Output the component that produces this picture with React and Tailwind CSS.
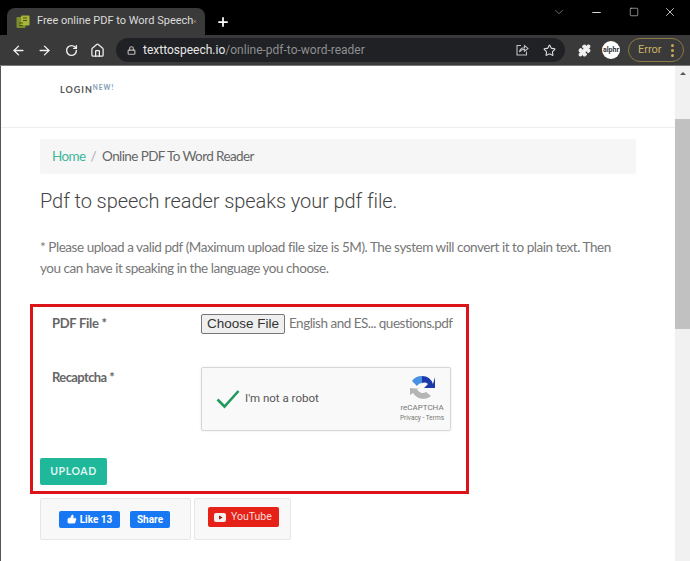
import { ArrowLeft, ArrowRight, RotateCw, Home, Lock, Star, Puzzle, X, Plus, ChevronDown, Minus, Square, ThumbsUp, Play } from 'lucide-react'

const TabBar = () => (
  <div className="h-[35px] bg-black flex items-end pl-[7px] text-white shrink-0">
    <div className="w-[198px] h-[27px] bg-[#3a3a3a] rounded-t-lg flex items-center pl-[9px] pr-[8px]">
      <svg width="14" height="14" viewBox="0 0 14 14" className="shrink-0">
        <rect x="0.5" y="2" width="9" height="11" rx="1" fill="#7d8c2c" />
        <rect x="5" y="0.5" width="8.5" height="10" rx="1" fill="#a8b536" />
        <path d="M7 3h4M7 5.5h4M3 8h4M3 10.5h4" stroke="#4c5618" strokeWidth="1" />
      </svg>
      <span className="ml-[7px] whitespace-nowrap text-[11px] text-[#dcdcdc] font-['Roboto',sans-serif]">Free online PDF to Word Speech</span>
      <X size={11} strokeWidth={3} className="ml-auto text-[#e8e8e8]" />
    </div>
    <Plus size={14} strokeWidth={3} className="ml-[11px] mb-[6px]" />
    <div className="ml-auto flex items-center pr-[13px] self-start pt-[5px] text-[#d8d8d8]">
      <ChevronDown size={14} strokeWidth={1.2} className="text-[#9a9a9a]" />
      <Minus size={13} strokeWidth={2} className="ml-[24px]" />
      <Square size={10} strokeWidth={1.5} className="ml-[26px]" />
      <X size={14} strokeWidth={1.5} className="ml-[24px]" />
    </div>
  </div>
)

const ToolBar = () => (
  <div className="h-[31px] bg-[#3a3a3a] border-b border-[#7b7b7b] flex items-center pl-[11px] text-[#f0f0f0] shrink-0">
    <ArrowLeft size={15} strokeWidth={2.2} />
    <ArrowRight size={15} strokeWidth={2.2} className="ml-[11px]" />
    <RotateCw size={13} strokeWidth={2.6} className="ml-[13px]" />
    <Home size={15} strokeWidth={2} className="ml-[12px]" />
    <div className="ml-[11px] w-[449px] h-[24px] bg-[#202124] rounded-full flex items-center pl-[11px] pr-[9px]">
      <Lock size={9} strokeWidth={3} className="text-[#b8b8b8]" />
      <span className="ml-[7px] text-[12px] font-['Roboto',sans-serif] text-[#e8e8e8] whitespace-nowrap">
        texttospeech.io<span className="text-[#8d8f92]">/online-pdf-to-word-reader</span>
      </span>
      <svg width="14" height="14" viewBox="0 0 14 14" fill="none" stroke="#c0c0c0" strokeWidth="1.1" className="ml-auto">
        <path d="M6 2.5H2v9.5h9.5V8.5" />
        <path d="M4.5 9c.4-2.6 2.2-4.2 5-4.2V2.6L13 5.4 9.5 8.2V6.2C7.5 6.2 5.7 7.2 4.5 9Z" />
      </svg>
      <Star size={13} strokeWidth={2} className="ml-[14px] text-[#e0e0e0]" />
    </div>
    <Puzzle size={13} strokeWidth={2} fill="currentColor" className="ml-[13px]" />
    <div className="ml-[11px] w-[18px] h-[18px] rounded-full bg-white text-[#333] text-[7px] font-bold flex items-center justify-center font-['Roboto',sans-serif]">alphr</div>
    <div className="ml-[8px] w-[56px] h-[24px] rounded-full border border-[#8a7a45] flex items-center pl-[9px] text-[11px] text-[#c9b067] font-['Roboto',sans-serif]">
      Error
      <div className="ml-auto mr-[9px] flex flex-col gap-[2px]">
        <span className="w-[3px] h-[3px] rounded-full bg-[#c9a94f]" />
        <span className="w-[3px] h-[3px] rounded-full bg-[#c9a94f]" />
        <span className="w-[3px] h-[3px] rounded-full bg-[#c9a94f]" />
      </div>
    </div>
  </div>
)

const Recaptcha = () => (
  <div className="w-[250px] h-[64px] shrink-0 bg-[#f9f9f9] border border-[#d6d6d6] rounded-[2px] shadow-[0_0_3px_rgba(0,0,0,0.08)] flex items-center font-['Roboto',sans-serif]">
    <svg width="24" height="20" viewBox="0 0 24 20" className="ml-[14px] shrink-0">
      <path d="M1.5 10.5 L8.5 17.5 L22.5 2" fill="none" stroke="#1f9a5c" strokeWidth="2.6" />
    </svg>
    <span className="ml-[5px] text-[11.5px] text-[#555]">I'm not a robot</span>
    <div className="ml-auto w-[56px] flex flex-col items-center text-[#777]">
      <svg width="26" height="27" viewBox="0 0 26 27">
        <path d="M13 1 A12 12 0 0 0 3 6 L8 11 A6 6 0 0 1 13 8 Z" fill="#4a90e2" />
        <path d="M13 1 A12 12 0 0 1 24 9 L26 2 L26 13 L15 13 L19 9 A6 6 0 0 0 13 8 Z" fill="#1c3aa9" />
        <path d="M1 13 L1 20 L4 18 A12 12 0 0 0 22 21 L17 17 A6 6 0 0 1 8 14 L12 14 L1 13 Z" fill="#b5b5b5" />
      </svg>
      <span className="text-[8px] leading-[10px] mt-[1px]">reCAPTCHA</span>
      <span className="text-[6.5px] leading-[10px] whitespace-nowrap">Privacy - Terms</span>
    </div>
  </div>
)

const App = () => {
  return (
    <div className="w-[690px] h-[561px] overflow-hidden flex flex-col bg-white font-['Lato',sans-serif]">
      <TabBar />
      <ToolBar />
      <div className="flex-1 flex min-h-0 border-l border-[#555]">
        <div className="flex-1 min-w-0">
          {/* Site header */}
          <div className="h-[62px] border-b border-[#eeeeee] pl-[59px] pt-[9px]">
            <span className="text-[9px] font-bold tracking-[1px] text-[#555]">LOGIN</span>
            <sup className="text-[6.5px] tracking-[1px] text-[#7d9ab5] font-bold">NEW!</sup>
          </div>

          <div className="pl-[39px] pr-[39px] pt-[11px]">
            {/* Breadcrumb */}
            <div className="h-[35px] bg-[#f6f6f6] rounded-[2px] flex items-center pl-[12px] text-[13.5px] tracking-[-0.6px]">
              <span className="text-[#3fb69a]">Home</span>
              <span className="ml-[5px] text-[#aaa]">/</span>
              <span className="ml-[6px] text-[#666]">Online PDF To Word Reader</span>
            </div>

            <h1 className="mt-[12px] text-[20px] leading-[30px] tracking-[-0.08px] font-light text-[#444] font-['Roboto',sans-serif] whitespace-nowrap">Pdf to speech reader speaks your pdf file.</h1>

            <p className="mt-[21px] w-[590px] text-[13.5px] leading-[21px] tracking-[-0.45px] text-[#777]">
              * Please upload a valid pdf (Maximum upload file size is 5M). The system will convert it to plain text. Then you can have it speaking in the language you choose.
            </p>
          </div>

          {/* Highlighted form */}
          <div className="ml-[29px] mt-[25px] w-[439px] h-[190px] border-[3px] border-[#dc1419] pl-[7px] pt-[7px]">
            <div className="flex items-center h-[20px] pl-[12px]">
              <span className="w-[149px] shrink-0 text-[13px] font-bold tracking-[-0.3px] text-[#666]">PDF File *</span>
              <div className="w-[84px] h-[20px] shrink-0 bg-[#efefef] border border-[#767676] rounded-[2px] flex items-center justify-center text-[13.5px] text-[#333] font-['Liberation_Sans',sans-serif]">Choose File</div>
              <span className="ml-[4px] -mt-[1px] text-[13.5px] tracking-[-0.5px] text-[#777] whitespace-nowrap">English and ES... questions.pdf</span>
            </div>
            <div className="flex pl-[12px] mt-[33px]">
              <span className="w-[149px] shrink-0 text-[13px] font-bold tracking-[-0.6px] leading-[20px] text-[#666]">Recaptcha *</span>
              <Recaptcha />
            </div>
            <div className="mt-[27px] w-[67px] h-[27px] bg-[#1fb89b] rounded-[2px] flex items-center justify-center text-[10.5px] font-bold tracking-[0.6px] text-[#dff5f0]">UPLOAD</div>
          </div>

          {/* Social buttons */}
          <div className="ml-[39px] mt-[4px] flex gap-[3px]">
            <div className="w-[151px] h-[42px] bg-[#f8f8f8] border border-[#e6e6e6] rounded-[2px] flex items-center pl-[18px] gap-[10px] text-white text-[10px] font-bold font-['Roboto',sans-serif]">
              <div className="w-[61px] h-[17px] bg-[#1877f2] rounded-[2px] flex items-center justify-center gap-[3px]">
                <ThumbsUp size={10} fill="currentColor" strokeWidth={1} />
                Like 13
              </div>
              <div className="w-[40px] h-[17px] bg-[#1877f2] rounded-[2px] flex items-center justify-center">Share</div>
            </div>
            <div className="w-[97px] h-[42px] bg-[#f8f8f8] border border-[#e6e6e6] rounded-[2px] pl-[13px] pt-[8px]">
              <div className="w-[71px] h-[20px] bg-[#e62117] rounded-[2px] flex items-center pl-[6px] gap-[5px] text-[10.5px] text-[#f5dcdc] font-['Roboto',sans-serif]">
                <div className="w-[12px] h-[9px] bg-[#f5f0f0] rounded-[2px] flex items-center justify-center">
                  <Play size={5} fill="#a01010" strokeWidth={0} />
                </div>
                YouTube
              </div>
            </div>
          </div>
        </div>

        {/* Scrollbar */}
        <div className="w-[15px] bg-[#f1f1f1] shrink-0">
          <div className="h-[15px] flex items-center justify-center">
            <div className="w-0 h-0 border-x-[3px] border-x-transparent border-b-[3px] border-b-[#555]" />
          </div>
          <div className="mt-[38px] h-[210px] bg-[#c1c1c1]" />
        </div>
      </div>
    </div>
  )
}

export default App
